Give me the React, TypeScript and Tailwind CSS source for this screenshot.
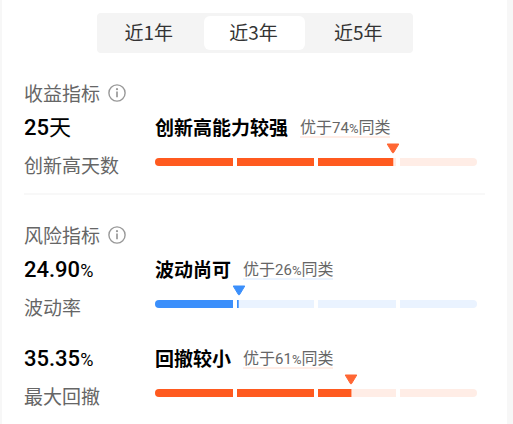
import { useState } from "react";
import clsx from "clsx";

type Tone = "orange" | "blue";

type Metric = {
    value: string;
    unit: string;
    label: string;
    verdict: string;
    rank: number;
    tone: Tone;
};

const periods = ["近1年", "近3年", "近5年"];

const returnMetrics: Metric[] = [
    { value: "25", unit: "天", label: "创新高天数", verdict: "创新高能力较强", rank: 74, tone: "orange" },
];

const riskMetrics: Metric[] = [
    { value: "24.90", unit: "%", label: "波动率", verdict: "波动尚可", rank: 26, tone: "blue" },
    { value: "35.35", unit: "%", label: "最大回撤", verdict: "回撤较小", rank: 61, tone: "orange" },
];

const tones = {
    orange: { track: "bg-[#ffede6]", fill: "bg-[#ff5a1f]", arrow: "text-[#ff6633]", line: "border-[#ffede6]" },
    blue: { track: "bg-[#eaf3ff]", fill: "bg-[#3b8ffb]", arrow: "text-[#3b8ffb]", line: "border-[#eaf3ff]" },
};

function Segments({ color }: { color: string }) {
    return (
        <div className="grid grid-cols-4 gap-1 h-2 rounded-full overflow-hidden">
            {[0, 1, 2, 3].map((i) => (
                <span key={i} className={color} />
            ))}
        </div>
    );
}

function Meter({ rank, tone }: { rank: number; tone: Tone }) {
    const t = tones[tone];
    return (
        <div className="relative pt-[19px]" role="img" aria-label={`${rank}%`}>
            <Segments color={t.track} />
            <div className="absolute inset-x-0 bottom-0" style={{ clipPath: `inset(0 ${100 - rank}% 0 0)` }}>
                <Segments color={t.fill} />
            </div>
            <svg
                className={clsx("absolute top-1 w-[14px] h-[11px] -translate-x-1/2", t.arrow)}
                style={{ left: `${rank}%` }}
                viewBox="0 0 14 11"
                fill="currentColor"
                stroke="currentColor"
                strokeLinejoin="round"
            >
                <path d="M1.2 1h11.6L7.6 9.6a.7.7 0 0 1-1.2 0Z" />
            </svg>
        </div>
    );
}

function MetricRow({ metric }: { metric: Metric }) {
    return (
        <div className="grid grid-cols-[131px_1fr]">
            <div>
                <p className="text-[22px] leading-8 text-black">
                    <span className="font-[Roboto,sans-serif] font-medium leading-none">{metric.value}</span>
                    {metric.unit === "%" ? (
                        <span className="font-[Roboto,sans-serif] text-[18px] leading-none">%</span>
                    ) : (
                        metric.unit
                    )}
                </p>
                <p className="mt-3 text-[19px] leading-6 text-[#666666]">{metric.label}</p>
            </div>
            <div className="pt-1.5 pr-2">
                <div className="flex items-center gap-3">
                    <h3 className="text-[19px] leading-6 font-bold text-black">{metric.verdict}</h3>
                    <span className={clsx("text-[16px] leading-[18px] text-[#666666] border-b-2", tones[metric.tone].line)}>
                        优于
                        <span className="font-[Roboto,sans-serif] text-[15px] leading-none">{metric.rank}</span>
                        <span className="font-[Roboto,sans-serif] text-[13px] leading-none">%</span>
                        同类
                    </span>
                </div>
                <Meter rank={metric.rank} tone={metric.tone} />
            </div>
        </div>
    );
}

function MetricSection({ title, metrics }: { title: string; metrics: Metric[] }) {
    return (
        <section>
            <div className="flex items-center gap-2 mb-1 text-[#666666]">
                <h2 className="text-[19px] leading-6">{title}</h2>
                <button type="button" aria-label={title} className="text-[#999999]">
                    <svg className="w-[18px] h-[18px]" viewBox="0 0 18 18" fill="none" stroke="currentColor">
                        <circle cx="9" cy="9" r="8.1" strokeWidth="1.4" />
                        <path d="M9 7.6v5.6" strokeWidth="1.7" />
                        <circle cx="9" cy="5.2" r="1.1" fill="currentColor" stroke="none" />
                    </svg>
                </button>
            </div>
            <div className="flex flex-col gap-[21px]">
                {metrics.map((m) => (
                    <MetricRow key={m.label} metric={m} />
                ))}
            </div>
        </section>
    );
}

export default function App() {
    const [period, setPeriod] = useState("近3年");

    return (
        <div className="min-h-screen bg-[#f7f7f7] pl-0.5 pr-1.5 font-['Noto_Sans_CJK_SC',sans-serif]">
            <main className="min-h-screen bg-white px-[22px] pt-[13px]">
                <div className="grid grid-cols-3 gap-1 w-[316px] mx-auto p-[3px] rounded bg-[#f4f4f4]">
                    {periods.map((p) => (
                        <button
                            key={p}
                            type="button"
                            aria-pressed={p === period}
                            onClick={() => setPeriod(p)}
                            className={clsx(
                                "h-[34px] pr-0.5 pb-0.5 rounded-md text-[19px] leading-6 text-[#333333]",
                                p === period && "bg-white"
                            )}
                        >
                            {p}
                        </button>
                    ))}
                </div>

                <div className="mt-7">
                    <MetricSection title="收益指标" metrics={returnMetrics} />
                    <hr className="mt-4 mb-7 border-t-2 border-[#f8f8f8]" />
                    <MetricSection title="风险指标" metrics={riskMetrics} />
                </div>
            </main>
        </div>
    );
}
